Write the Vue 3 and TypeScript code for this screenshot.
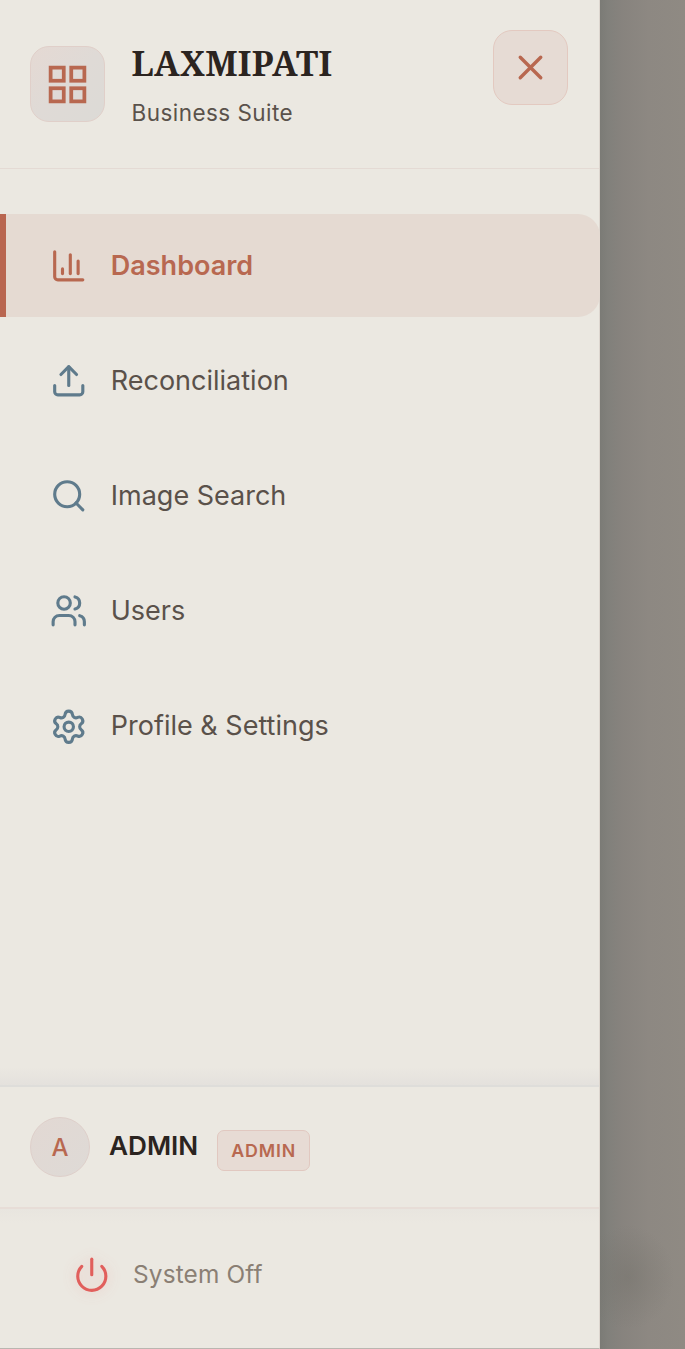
<script setup lang="ts">
interface NavItem {
  label: string
  paths: string[]
  circle?: { cx: number; cy: number; r: number }
  active?: boolean
}

const items: NavItem[] = [
  {
    label: 'Dashboard',
    paths: ['M3 3v16a2 2 0 0 0 2 2h16', 'M18 17V9', 'M13 17V5', 'M8 17v-3'],
    active: true,
  },
  {
    label: 'Reconciliation',
    paths: ['M21 15v4a2 2 0 0 1-2 2H5a2 2 0 0 1-2-2v-4', 'M17 8l-5-5-5 5', 'M12 3v12'],
  },
  {
    label: 'Image Search',
    paths: ['M21 21l-4.35-4.35'],
    circle: { cx: 11, cy: 11, r: 8 },
  },
  {
    label: 'Users',
    paths: [
      'M16 21v-2a4 4 0 0 0-4-4H6a4 4 0 0 0-4 4v2',
      'M22 21v-2a4 4 0 0 0-3-3.87',
      'M16 3.13a4 4 0 0 1 0 7.75',
    ],
    circle: { cx: 9, cy: 7, r: 4 },
  },
  {
    label: 'Profile & Settings',
    paths: [
      'M9.671 4.136a2.34 2.34 0 0 1 4.659 0 2.34 2.34 0 0 0 3.319 1.915 2.34 2.34 0 0 1 2.33 4.033 2.34 2.34 0 0 0 0 3.831 2.34 2.34 0 0 1-2.33 4.033 2.34 2.34 0 0 0-3.319 1.915 2.34 2.34 0 0 1-4.659 0 2.34 2.34 0 0 0-3.32-1.915 2.34 2.34 0 0 1-2.33-4.033 2.34 2.34 0 0 0 0-3.831A2.34 2.34 0 0 1 6.35 6.051a2.34 2.34 0 0 0 3.319-1.915',
    ],
    circle: { cx: 12, cy: 12, r: 3 },
  },
]
</script>

<template>
  <div class="screen">
    <aside class="sidebar">
      <header class="head">
        <div class="logo">
          <svg viewBox="0 0 24 24" class="logo-icon">
            <rect x="3" y="3" width="7" height="7" />
            <rect x="14" y="3" width="7" height="7" />
            <rect x="3" y="14" width="7" height="7" />
            <rect x="14" y="14" width="7" height="7" />
          </svg>
        </div>
        <div class="brand">
          <div class="title">LAXMIPATI</div>
          <div class="subtitle">Business Suite</div>
        </div>
        <button class="close" aria-label="Close menu">
          <svg viewBox="0 0 24 24" class="close-icon">
            <path d="M18 6L6 18M6 6l12 12" />
          </svg>
        </button>
      </header>

      <nav class="nav">
        <a v-for="item in items" :key="item.label" class="item" :class="{ active: item.active }">
          <svg viewBox="0 0 24 24" class="icon">
            <circle v-if="item.circle" :cx="item.circle.cx" :cy="item.circle.cy" :r="item.circle.r" />
            <path v-for="d in item.paths" :key="d" :d="d" />
          </svg>
          <span class="label">{{ item.label }}</span>
        </a>
      </nav>

      <section class="profile">
        <div class="avatar">A</div>
        <span class="name">ADMIN</span>
        <span class="badge">ADMIN</span>
      </section>

      <footer class="foot">
        <svg viewBox="0 0 24 24" class="icon power">
          <path d="M12 2v10" />
          <path d="M18.4 6.6a9 9 0 1 1-12.77.04" />
        </svg>
        <span class="off">System Off</span>
      </footer>
    </aside>
    <div class="backdrop"></div>
  </div>
</template>

<style>
body {
  margin: 0;
}
</style>

<style scoped>
.screen {
  display: flex;
  width: 685px;
  height: 1349px;
  overflow: hidden;
  font-family: Inter, 'Liberation Sans', sans-serif;
  background: #8d8881;
}
.screen * {
  box-sizing: border-box;
}
svg {
  display: block;
  flex: none;
  fill: none;
  stroke: currentColor;
  stroke-width: 2;
}
.sidebar {
  display: flex;
  flex-direction: column;
  width: 600px;
  height: 1349px;
  flex: none;
  background: #ebe8e1;
  border-right: 1px solid #ddd6cf;
  border-bottom: 1px solid #b9b6b0;
}
.backdrop {
  flex: 1;
  background:
    radial-gradient(ellipse 46px 52px at 28px 1277px, rgba(112, 110, 103, 0.4), rgba(112, 110, 103, 0.22) 45%, transparent),
    linear-gradient(90deg, #7b7b76 0, #81807b 8px, #87837e 22px, #8d8882 48px, #8f8a83 85px);
}
.head {
  display: flex;
  align-items: flex-start;
  height: 169px;
  padding: 30px 31px 0 30px;
  border-bottom: 1px solid #e4dad4;
}
.logo {
  display: flex;
  align-items: center;
  justify-content: center;
  width: 75px;
  height: 76px;
  margin-top: 16px;
  border: 1px solid #e0cfc9;
  border-radius: 19px;
  background: linear-gradient(135deg, #e5d9d3, #dfdad6 50%, #dcdad6);
  color: #b86850;
}
.logo-icon {
  width: 45px;
  height: 45px;
}
.brand {
  margin-left: 26.5px;
  padding-top: 12px;
}
.title {
  font-family: 'Noto Serif', 'Liberation Serif', serif;
  font-weight: 700;
  font-size: 34px;
  line-height: 42px;
  letter-spacing: 0.3px;
  color: #2b2420;
}
.subtitle {
  margin-top: 14px;
  font-size: 22.5px;
  line-height: 30px;
  letter-spacing: 0.45px;
  color: #5a524b;
}
.close {
  display: flex;
  align-items: center;
  justify-content: center;
  width: 75px;
  height: 75px;
  margin-left: auto;
  padding: 0;
  border: 1.5px solid #e3c9c0;
  border-radius: 19px;
  background: #e6dbd4;
  color: #b86850;
}
.close-icon {
  width: 41px;
  height: 41px;
  stroke-linecap: round;
}
.nav {
  display: flex;
  flex-direction: column;
  gap: 12px;
  flex: 1;
  padding-top: 45px;
  background: linear-gradient(#ebe8e100 calc(100% - 18px), #e4e1dd);
}
.item {
  display: flex;
  align-items: center;
  height: 103.2px;
  padding-left: 50.1px;
  color: #5a514a;
}
.icon {
  width: 37.5px;
  height: 37.5px;
  stroke-linecap: round;
  stroke-linejoin: round;
  color: #5f7b8c;
}
.label {
  margin-left: 23.2px;
  font-size: 27px;
  line-height: 36px;
}
.active {
  padding-left: 44.1px;
  margin-right: -1px;
  border-left: 6px solid #b96650;
  border-radius: 0 22px 22px 0;
  background: #e5dad2;
  color: #b86850;
}
.active .icon {
  color: #b86850;
}
.active .label {
  font-weight: 600;
}
.profile {
  display: flex;
  align-items: center;
  height: 124px;
  padding: 0 30px;
  border-top: 2px solid #deddda;
  border-bottom: 2px solid #e7ddd7;
}
.avatar {
  display: flex;
  align-items: center;
  justify-content: center;
  width: 60px;
  height: 60px;
  border: 1.5px solid #decfca;
  border-radius: 50%;
  background: linear-gradient(135deg, #e2d8d3, #dedad6);
  color: #b86850;
  font-size: 24px;
  font-weight: 500;
}
.name {
  margin: -3px 0 0 19px;
  font-size: 26.2px;
  font-weight: 600;
  line-height: 36px;
  color: #2b2420;
}
.badge {
  display: flex;
  align-items: center;
  justify-content: center;
  width: 93px;
  height: 41px;
  margin: 7px 0 0 19px;
  border: 1.5px solid #e1c8c0;
  border-radius: 7px;
  background: #e7dbd4;
  color: #b86850;
  font-size: 17.8px;
  font-weight: 600;
  letter-spacing: 0.85px;
}
.foot {
  display: flex;
  align-items: center;
  height: 139px;
  padding: 0 0 8px 73px;
  background: linear-gradient(#e8e5df, #ebe8e100 14px);
}
.power {
  color: #e15f5c;
  filter: drop-shadow(0 0 7px rgba(239, 68, 68, 0.22));
}
.off {
  margin: -2px 0 0 22.5px;
  font-size: 24.4px;
  line-height: 34px;
  letter-spacing: 0.15px;
  color: #8a7f74;
}
</style>
